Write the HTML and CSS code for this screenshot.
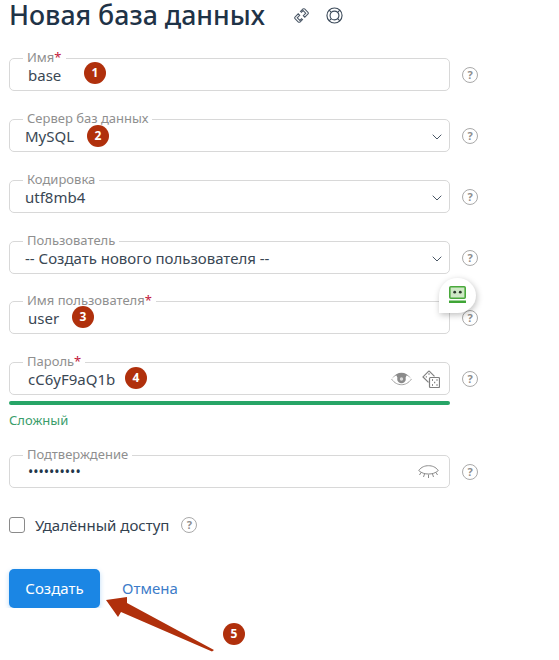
FILE: index.html
```html
<!DOCTYPE html>
<html>
<head>
    <title>Новая база данных</title>
    <link rel="stylesheet" href="styles.css">
</head>
<body>
    <div class="page">
        <div class="title-row">
            <h1>Новая база данных</h1>
            <svg class="title-icon" viewBox="0 0 18 18" width="17" height="17">
                <path d="M7.500 5.200 10.600 2.100a1.200 1.200 0 0 1 1.700 0l3.600 3.600a1.200 1.200 0 0 1 0 1.700l-3.400 3.400-1.600-1.600 2.600-2.600-2.800-2.800-2.200 2.200M10.500 12.800 7.400 15.900a1.200 1.200 0 0 1-1.700 0L2.100 12.300a1.200 1.200 0 0 1 0-1.700l3.400-3.400 1.600 1.600-2.600 2.600 2.800 2.800 2.200-2.200" fill="none" stroke="#4a5766" stroke-width="1.100"/>
            </svg>
            <svg class="title-icon" viewBox="0 0 18 18" width="17" height="17">
                <circle cx="9" cy="9" r="8" fill="none" stroke="#3c4a5a" stroke-width="1.200"/>
                <circle cx="9" cy="9" r="4.700" fill="none" stroke="#3c4a5a" stroke-width="1.200"/>
                <path d="M3.300 3.300 5.700 5.700M14.700 3.300 12.300 5.700M3.300 14.700 5.700 12.300M14.700 14.700 12.300 12.300" stroke="#3c4a5a" stroke-width="1.200"/>
            </svg>
        </div>

        <div class="form-row">
            <div class="field">
                <span class="field-label">Имя<em>*</em></span>
                <span class="field-value">base</span>
                <span class="marker marker-1">1</span>
            </div>
            <span class="help">?</span>
        </div>

        <div class="form-row">
            <div class="field">
                <span class="field-label">Сервер баз данных</span>
                <span class="field-value value-select">MySQL</span>
                <span class="marker marker-2">2</span>
                <svg class="chevron" viewBox="0 0 10 6" width="10" height="6"><path d="M.7.700 5 5 9.300.700" fill="none" stroke="#4a5766" stroke-width="1"/></svg>
            </div>
            <span class="help">?</span>
        </div>

        <div class="form-row">
            <div class="field">
                <span class="field-label">Кодировка</span>
                <span class="field-value value-select">utf8mb4</span>
                <svg class="chevron" viewBox="0 0 10 6" width="10" height="6"><path d="M.7.700 5 5 9.300.700" fill="none" stroke="#4a5766" stroke-width="1"/></svg>
            </div>
            <span class="help">?</span>
        </div>

        <div class="form-row row-tight">
            <div class="field">
                <span class="field-label">Пользователь</span>
                <span class="field-value value-select">-- Создать нового пользователя --</span>
                <svg class="chevron" viewBox="0 0 10 6" width="10" height="6"><path d="M.7.700 5 5 9.300.700" fill="none" stroke="#4a5766" stroke-width="1"/></svg>
            </div>
            <span class="help">?</span>
        </div>

        <div class="form-row">
            <div class="field">
                <span class="field-label">Имя пользователя<em>*</em></span>
                <span class="field-value">user</span>
                <span class="marker marker-3">3</span>
            </div>
            <span class="help">?</span>
            <div class="robo-badge">
                <svg viewBox="0 0 17 17" width="17" height="17">
                    <rect x=".8" y=".8" width="15.400" height="11.400" rx="1" fill="#cfe8c6" stroke="#4aa93c" stroke-width="1.600"/>
                    <circle cx="5.700" cy="6.200" r="1.400" fill="#2c3a2c"/>
                    <circle cx="11.300" cy="6.200" r="1.400" fill="#2c3a2c"/>
                    <rect x="0" y="14.500" width="17" height="2.500" fill="#3fa535"/>
                </svg>
            </div>
        </div>

        <div class="form-row row-password">
            <div class="field">
                <span class="field-label">Пароль<em>*</em></span>
                <span class="field-value">cC6yF9aQ1b</span>
                <span class="marker marker-4">4</span>
                <svg class="eye" viewBox="0 0 21 14" width="21" height="14">
                    <path d="M.5 7C3.500 2.600 7 .8 10.500.8s7 1.800 10 6.200c-2.500-2.600-3.500-3.200-5-3.600a5.200 5.200 0 0 1-10 0C4 3.800 3 4.400.5 7Z" fill="#8b8b8b"/>
                    <path d="M.5 7c3 4.200 6.500 5.700 10 5.700s7-1.500 10-5.700" fill="none" stroke="#a3a3a3" stroke-width="1"/>
                    <circle cx="10.500" cy="7" r="4.300" fill="#8b8b8b"/>
                    <circle cx="10.500" cy="7" r="1.700" fill="#dcdcdc"/>
                </svg>
                <svg class="dice" viewBox="0 0 18 18" width="18" height="18">
                    <path d="M7 .9 1 6.900l5.500 5.500M7 .9l5.500 5.500" fill="none" stroke="#7f7f7f" stroke-width="1.200"/>
                    <rect x="7.500" y="7.500" width="10" height="10" rx="1" fill="#fff" stroke="#7f7f7f" stroke-width="1.200"/>
                    <path d="M10 10h1M14.500 10h1M12.200 12.500h1M10 15h1M14.500 15h1M6.500 4h1M3.800 6.800h1" stroke="#666" stroke-width="1.300"/>
                </svg>
            </div>
            <span class="help">?</span>
        </div>
        <div class="strength-bar"></div>
        <div class="strength-text">Сложный</div>

        <div class="form-row">
            <div class="field">
                <span class="field-label">Подтверждение</span>
                <span class="field-value value-dots">••••••••••</span>
                <svg class="eye eye-closed" viewBox="0 0 21 14" width="21" height="14">
                    <path d="M.7 5.500C3.500 1.800 7 .7 10.500.7s7 1.100 9.800 4.800C17.500 8.200 14 9 10.500 9S3.500 8.200.7 5.500Z" fill="none" stroke="#8b8b8b" stroke-width="1"/>
                    <path d="M3 7.500 1.500 10M6.500 9 5.500 12M10.500 9.500V13M14.500 9l1 3M18 7.500l1.500 2.500" stroke="#8b8b8b" stroke-width="1"/>
                </svg>
            </div>
            <span class="help">?</span>
        </div>

        <div class="remote">
            <span class="checkbox"></span>
            <span class="remote-label">Удалённый доступ</span>
            <span class="help">?</span>
        </div>

        <div class="actions">
            <button class="btn-create">Создать</button>
            <a class="btn-cancel">Отмена</a>
        </div>
    </div>

    <svg class="arrow" viewBox="0 0 116 64" width="116" height="64">
        <path d="M6 10 27 7 27 13 114 60 112 61.500 21 22 18 27Z" fill="#b0300c"/>
    </svg>
    <span class="marker marker-5">5</span>
</body>
</html>
```

FILE: styles.css
```css
body {
    margin: 0;
    font-family: "Noto Sans", Arial, sans-serif;
    color: #2b3a4a;
    background: #fff;
}

.page {
    padding: 0 0 0 9px;
    width: 490px;
}

.title-row {
    display: flex;
    align-items: center;
    height: 29px;
    margin-bottom: 29px;
}

h1 {
    margin: 0;
    font-size: 26.700px;
    line-height: 29px;
    font-weight: 500;
    color: #1f3347;
    width: 284px;
    white-space: nowrap;
}

.title-icon {
    align-self: flex-start;
    margin-top: 7px;
    margin-right: 16px;
    flex: none;
}

.form-row {
    display: flex;
    align-items: center;
    position: relative;
    margin-bottom: 28px;
}

.row-tight {
    margin-bottom: 27px;
}

.field {
    position: relative;
    box-sizing: border-box;
    width: 441px;
    height: 33px;
    border: 1px solid #d8d8d8;
    border-radius: 5px;
    display: flex;
    align-items: center;
}

.field-label {
    position: absolute;
    left: 13px;
    top: -9px;
    padding: 0 4px;
    background: #fff;
    font-size: 13px;
    line-height: 14px;
    color: #8f8f8f;
}

.field-label em {
    color: #c2183c;
    font-style: normal;
}

.field-value {
    margin-left: 18px;
    font-size: 15px;
    color: #3a4754;
    white-space: nowrap;
}

.value-select {
    margin-left: 15px;
}

.value-dots {
    font-size: 14px;
    color: #22364a;
}

.chevron {
    position: absolute;
    right: 7px;
    top: 14px;
}

.eye {
    position: absolute;
    right: 37px;
    top: 9px;
}

.eye-closed {
    right: 10px;
    top: 9px;
}

.dice {
    position: absolute;
    right: 9px;
    top: 7px;
}

.help {
    box-sizing: border-box;
    flex: none;
    width: 16px;
    height: 16px;
    margin-left: 12px;
    border: 1px solid #a9a9a9;
    border-radius: 50%;
    font-size: 11px;
    line-height: 14px;
    font-weight: 700;
    text-align: center;
    color: #8e8e8e;
}

.row-password {
    margin-bottom: 6px;
}

.strength-bar {
    width: 441px;
    height: 4px;
    border-radius: 2px;
    background: #27a567;
}

.strength-text {
    margin-top: 6px;
    margin-bottom: 26px;
    font-size: 13px;
    line-height: 18px;
    color: #3a9d6a;
}

.remote {
    display: flex;
    align-items: center;
    height: 16px;
    margin-top: 29px;
}

.checkbox {
    box-sizing: border-box;
    width: 16px;
    height: 16px;
    border: 1px solid #8a8a8a;
    border-radius: 3px;
}

.remote-label {
    margin-left: 10px;
    font-size: 15px;
    color: #33414f;
}

.actions {
    display: flex;
    align-items: center;
    margin-top: 36px;
}

.btn-create {
    width: 91px;
    height: 39px;
    padding: 0 0 2px;
    border: none;
    border-radius: 5px;
    background: #1b86e4;
    color: #fff;
    font-family: inherit;
    font-size: 15px;
    box-shadow: 0 2px 5px rgba(27, 134, 228, 0.3);
}

.btn-cancel {
    margin-left: 22px;
    padding-bottom: 2px;
    font-size: 15px;
    color: #3d7cc9;
}

.marker {
    position: absolute;
    box-sizing: border-box;
    width: 22px;
    height: 22px;
    border-radius: 50%;
    background: #b0300c;
    color: #fff;
    font-size: 12px;
    font-weight: 700;
    line-height: 22px;
    text-align: center;
}

.marker-1 { left: 74px; top: 3px; }
.marker-2 { left: 77px; top: 5px; }
.marker-3 { left: 62px; top: 4px; }
.marker-4 { left: 115px; top: 4px; }
.marker-5 { left: 223px; top: 623px; }

.robo-badge {
    position: absolute;
    left: 430px;
    top: -23px;
    box-sizing: border-box;
    width: 37px;
    height: 35px;
    padding: 8px 0 0 10px;
    background: #fff;
    border-radius: 50% 50% 50% 0;
    box-shadow: 1px 2px 6px rgba(0, 0, 0, 0.25);
}

.arrow {
    position: absolute;
    left: 100px;
    top: 590px;
}
```
